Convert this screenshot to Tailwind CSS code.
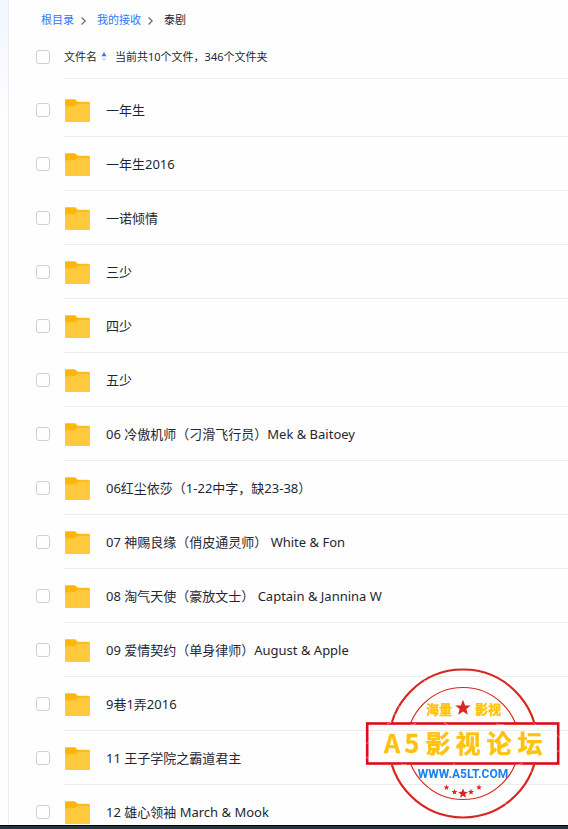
<!DOCTYPE html>
<html lang="zh-CN" class="h-full">

<head>
    <meta charset="UTF-8" />
    <meta name="viewport" content="width=device-width, initial-scale=1.0" />
    <title>泰剧</title>
    <script src="https://cdn.jsdelivr.net/npm/@tailwindcss/browser@4"></script>
</head>

<body class="h-screen flex flex-col overflow-hidden bg-[#fefefe] font-['Noto_Sans','Noto_Sans_CJK_SC',sans-serif] text-[#1f2733]">
    <!-- folder icon, shared by all rows -->
    <svg class="hidden" aria-hidden="true">
        <symbol id="folder" viewBox="0 0 25 23">
            <path d="M0 1Q0 0 1 0H9.500Q10.500 0 11.200 .9L12.800 2.700H23.500Q25 2.700 25 4.200V12H0Z" fill="#ffca45" />
            <path d="M0 1H10L12.800 3.200H24.500V6H0Z" fill="#ffb60a" />
            <path d="M0 7.300H8.500Q10 7.300 11 6.200L12.500 4.800H25V22Q25 23 24 23H1Q0 23 0 22Z" fill="#ffc93e" />
            <path d="M0 5H12L10.500 6.700Q10 7.300 9 7.300H0Z" fill="#ffb60a" />
        </symbol>
    </svg>

    <div class="flex flex-1 min-h-0">
        <aside class="w-[9px] shrink-0 border-r border-[#ececf0] bg-gradient-to-b from-[#f1f5ff] to-[#fefefe] to-15%"></aside>

        <main class="flex-1 min-w-0 overflow-hidden">
            <nav class="flex items-center h-10 pt-px pl-8 text-[11px]" aria-label="路径">
                <a href="#" class="text-[#2f77f5]">根目录</a>
                <svg class="w-[5px] h-2 ml-[7px] mr-[11px]" viewBox="0 0 5 8" fill="none" stroke="#666b75" stroke-width="1.200" aria-hidden="true"><path d="M.6.5 4.200 4 .6 7.500" /></svg>
                <a href="#" class="text-[#2f77f5]">我的接收</a>
                <svg class="w-[5px] h-2 ml-[7px] mr-[11px]" viewBox="0 0 5 8" fill="none" stroke="#666b75" stroke-width="1.200" aria-hidden="true"><path d="M.6.5 4.200 4 .6 7.500" /></svg>
                <span aria-current="page">泰剧</span>
            </nav>

            <div class="flex h-[39px] text-[11px]">
                <div class="w-[55px] shrink-0 pl-[27px] pt-[10px]">
                    <input type="checkbox" aria-label="全选" class="appearance-none block size-3.5 rounded-[3px] border border-[#cfcfd2] bg-white" />
                </div>
                <div class="flex flex-1 items-start pt-2 border-b border-[#ececec] leading-[18px]">
                    <button type="button" class="flex items-center gap-1">
                        文件名
                        <svg class="w-[6px] h-[10px]" viewBox="0 0 6 10" aria-hidden="true">
                            <path d="M3 0 5.500 4.200H.5Z" fill="#2f77f5" />
                            <path d="M.5 5.800H5.500L3 10Z" fill="#dcdde0" />
                        </svg>
                    </button>
                    <span class="ml-2">当前共10个文件，346个文件夹</span>
                </div>
            </div>

            <ul class="pt-1 text-[13px]">
                <li class="flex h-[54px]">
                    <div class="flex items-center w-[55px] shrink-0 pl-[27px]"><input type="checkbox" aria-label="一年生" class="appearance-none block size-3.5 rounded-[3px] border border-[#cfcfd2] bg-white" /></div>
                    <a href="#" class="flex flex-1 items-center gap-4 pt-0.5 pl-px border-b border-[#ececec]"><svg class="w-[25px] h-[23px]" aria-hidden="true"><use href="#folder" /></svg>一年生</a>
                </li>
                <li class="flex h-[54px]">
                    <div class="flex items-center w-[55px] shrink-0 pl-[27px]"><input type="checkbox" aria-label="一年生2016" class="appearance-none block size-3.5 rounded-[3px] border border-[#cfcfd2] bg-white" /></div>
                    <a href="#" class="flex flex-1 items-center gap-4 pt-0.5 pl-px border-b border-[#ececec]"><svg class="w-[25px] h-[23px]" aria-hidden="true"><use href="#folder" /></svg>一年生2016</a>
                </li>
                <li class="flex h-[54px]">
                    <div class="flex items-center w-[55px] shrink-0 pl-[27px]"><input type="checkbox" aria-label="一诺倾情" class="appearance-none block size-3.5 rounded-[3px] border border-[#cfcfd2] bg-white" /></div>
                    <a href="#" class="flex flex-1 items-center gap-4 pt-0.5 pl-px border-b border-[#ececec]"><svg class="w-[25px] h-[23px]" aria-hidden="true"><use href="#folder" /></svg>一诺倾情</a>
                </li>
                <li class="flex h-[54px]">
                    <div class="flex items-center w-[55px] shrink-0 pl-[27px]"><input type="checkbox" aria-label="三少" class="appearance-none block size-3.5 rounded-[3px] border border-[#cfcfd2] bg-white" /></div>
                    <a href="#" class="flex flex-1 items-center gap-4 pt-0.5 pl-px border-b border-[#ececec]"><svg class="w-[25px] h-[23px]" aria-hidden="true"><use href="#folder" /></svg>三少</a>
                </li>
                <li class="flex h-[54px]">
                    <div class="flex items-center w-[55px] shrink-0 pl-[27px]"><input type="checkbox" aria-label="四少" class="appearance-none block size-3.5 rounded-[3px] border border-[#cfcfd2] bg-white" /></div>
                    <a href="#" class="flex flex-1 items-center gap-4 pt-0.5 pl-px border-b border-[#ececec]"><svg class="w-[25px] h-[23px]" aria-hidden="true"><use href="#folder" /></svg>四少</a>
                </li>
                <li class="flex h-[54px]">
                    <div class="flex items-center w-[55px] shrink-0 pl-[27px]"><input type="checkbox" aria-label="五少" class="appearance-none block size-3.5 rounded-[3px] border border-[#cfcfd2] bg-white" /></div>
                    <a href="#" class="flex flex-1 items-center gap-4 pt-0.5 pl-px border-b border-[#ececec]"><svg class="w-[25px] h-[23px]" aria-hidden="true"><use href="#folder" /></svg>五少</a>
                </li>
                <li class="flex h-[54px]">
                    <div class="flex items-center w-[55px] shrink-0 pl-[27px]"><input type="checkbox" aria-label="06 冷傲机师" class="appearance-none block size-3.5 rounded-[3px] border border-[#cfcfd2] bg-white" /></div>
                    <a href="#" class="flex flex-1 items-center gap-4 pt-0.5 pl-px border-b border-[#ececec]"><svg class="w-[25px] h-[23px]" aria-hidden="true"><use href="#folder" /></svg>06 冷傲机师（刁滑飞行员）Mek &amp; Baitoey</a>
                </li>
                <li class="flex h-[54px]">
                    <div class="flex items-center w-[55px] shrink-0 pl-[27px]"><input type="checkbox" aria-label="06红尘依莎" class="appearance-none block size-3.5 rounded-[3px] border border-[#cfcfd2] bg-white" /></div>
                    <a href="#" class="flex flex-1 items-center gap-4 pt-0.5 pl-px border-b border-[#ececec]"><svg class="w-[25px] h-[23px]" aria-hidden="true"><use href="#folder" /></svg>06红尘依莎（1-22中字，缺23-38）</a>
                </li>
                <li class="flex h-[54px]">
                    <div class="flex items-center w-[55px] shrink-0 pl-[27px]"><input type="checkbox" aria-label="07 神赐良缘" class="appearance-none block size-3.5 rounded-[3px] border border-[#cfcfd2] bg-white" /></div>
                    <a href="#" class="flex flex-1 items-center gap-4 pt-0.5 pl-px border-b border-[#ececec]"><svg class="w-[25px] h-[23px]" aria-hidden="true"><use href="#folder" /></svg>07 神赐良缘（俏皮通灵师） White &amp; Fon</a>
                </li>
                <li class="flex h-[54px]">
                    <div class="flex items-center w-[55px] shrink-0 pl-[27px]"><input type="checkbox" aria-label="08 淘气天使" class="appearance-none block size-3.5 rounded-[3px] border border-[#cfcfd2] bg-white" /></div>
                    <a href="#" class="flex flex-1 items-center gap-4 pt-0.5 pl-px border-b border-[#ececec]"><svg class="w-[25px] h-[23px]" aria-hidden="true"><use href="#folder" /></svg>08 淘气天使（豪放文士） Captain &amp; Jannina W</a>
                </li>
                <li class="flex h-[54px]">
                    <div class="flex items-center w-[55px] shrink-0 pl-[27px]"><input type="checkbox" aria-label="09 爱情契约" class="appearance-none block size-3.5 rounded-[3px] border border-[#cfcfd2] bg-white" /></div>
                    <a href="#" class="flex flex-1 items-center gap-4 pt-0.5 pl-px border-b border-[#ececec]"><svg class="w-[25px] h-[23px]" aria-hidden="true"><use href="#folder" /></svg>09 爱情契约（单身律师）August &amp; Apple</a>
                </li>
                <li class="flex h-[54px]">
                    <div class="flex items-center w-[55px] shrink-0 pl-[27px]"><input type="checkbox" aria-label="9巷1弄2016" class="appearance-none block size-3.5 rounded-[3px] border border-[#cfcfd2] bg-white" /></div>
                    <a href="#" class="flex flex-1 items-center gap-4 pt-0.5 pl-px border-b border-[#ececec]"><svg class="w-[25px] h-[23px]" aria-hidden="true"><use href="#folder" /></svg>9巷1弄2016</a>
                </li>
                <li class="flex h-[54px]">
                    <div class="flex items-center w-[55px] shrink-0 pl-[27px]"><input type="checkbox" aria-label="11 王子学院之霸道君主" class="appearance-none block size-3.5 rounded-[3px] border border-[#cfcfd2] bg-white" /></div>
                    <a href="#" class="flex flex-1 items-center gap-4 pt-0.5 pl-px border-b border-[#ececec]"><svg class="w-[25px] h-[23px]" aria-hidden="true"><use href="#folder" /></svg>11 王子学院之霸道君主</a>
                </li>
                <li class="flex h-[54px]">
                    <div class="flex items-center w-[55px] shrink-0 pl-[27px]"><input type="checkbox" aria-label="12 雄心领袖" class="appearance-none block size-3.5 rounded-[3px] border border-[#cfcfd2] bg-white" /></div>
                    <a href="#" class="flex flex-1 items-center gap-4 pt-0.5 pl-px border-b border-[#ececec]"><svg class="w-[25px] h-[23px]" aria-hidden="true"><use href="#folder" /></svg>12 雄心领袖 March &amp; Mook</a>
                </li>
            </ul>
        </main>
    </div>

    <footer class="h-1 shrink-0 border-t border-black bg-[#22343c]"></footer>

    <!-- forum stamp, floats over the list -->
    <svg class="fixed right-[7px] bottom-[9px] w-[196px] h-[152px]" viewBox="0 0 196 152" role="img" aria-label="A5影视论坛">
        <defs>
            <clipPath id="outside-banner"><path d="M0 0H196V55H0ZM0 97H196V152H0Z" /></clipPath>
            <path id="star" d="M0-10 2.600-3.200 9.500-3.100 4.100 1.300 5.900 8.100 0 4.300-5.900 8.100-4.100 1.300-9.500-3.100-2.600-3.200Z" fill="#d9261f" />
        </defs>
        <g clip-path="url(#outside-banner)" fill="none" stroke="#d9261f">
            <circle cx="98" cy="75.500" r="74" stroke-width="2.200" />
            <circle cx="98" cy="75.500" r="56" stroke-width="1.200" />
        </g>
        <rect x="2.200" y="55.500" width="191" height="40" fill="none" stroke="#df0b1c" stroke-width="2.600" />
        <!-- worn spots -->
        <g stroke="#fff" stroke-width=".6" opacity=".7">
            <path d="M22 56 27 54M46 57 51 55.500M79 54.500 83 57M131 56 139 57M168 54.500 171 57M1 76 4 73M1 89 4 91M192 67 195 70M192 84 195 82M36 96 42 97M88 95 90 97M151 97 158 95.500M33 38 36 40M29 46 32 48M59 12 62 15M139 135 143 137M47 127 50 129M73 147 76 150M151 22 154 20M165 103 168 105" />
        </g>
        <use href="#star" transform="translate(98 40) scale(.82)" />
        <use href="#star" transform="translate(81.500 119.500) scale(.3)" />
        <use href="#star" transform="translate(89.500 124) scale(.32)" />
        <use href="#star" transform="translate(98 125.500) scale(.52)" />
        <use href="#star" transform="translate(106 124) scale(.32)" />
        <use href="#star" transform="translate(114 119.500) scale(.3)" />
        <g class="font-['Noto_Sans_CJK_SC',sans-serif] font-bold" fill="#ffc20e" stroke="#ffc20e" stroke-width=".4" stroke-linejoin="round" text-anchor="middle">
            <text class="text-[13px]" x="74" y="46">海量</text>
            <text class="text-[13px]" x="123" y="46">影视</text>
            <text class="text-[25px]" y="85" x="27 47 73 103 134 165">A5影视论坛</text>
        </g>
        <text class="font-['Roboto',sans-serif] font-bold text-[12px]" x="98" y="110" fill="#1a80ee" text-anchor="middle">WWW.A5LT.COM</text>
    </svg>
</body>

</html>
